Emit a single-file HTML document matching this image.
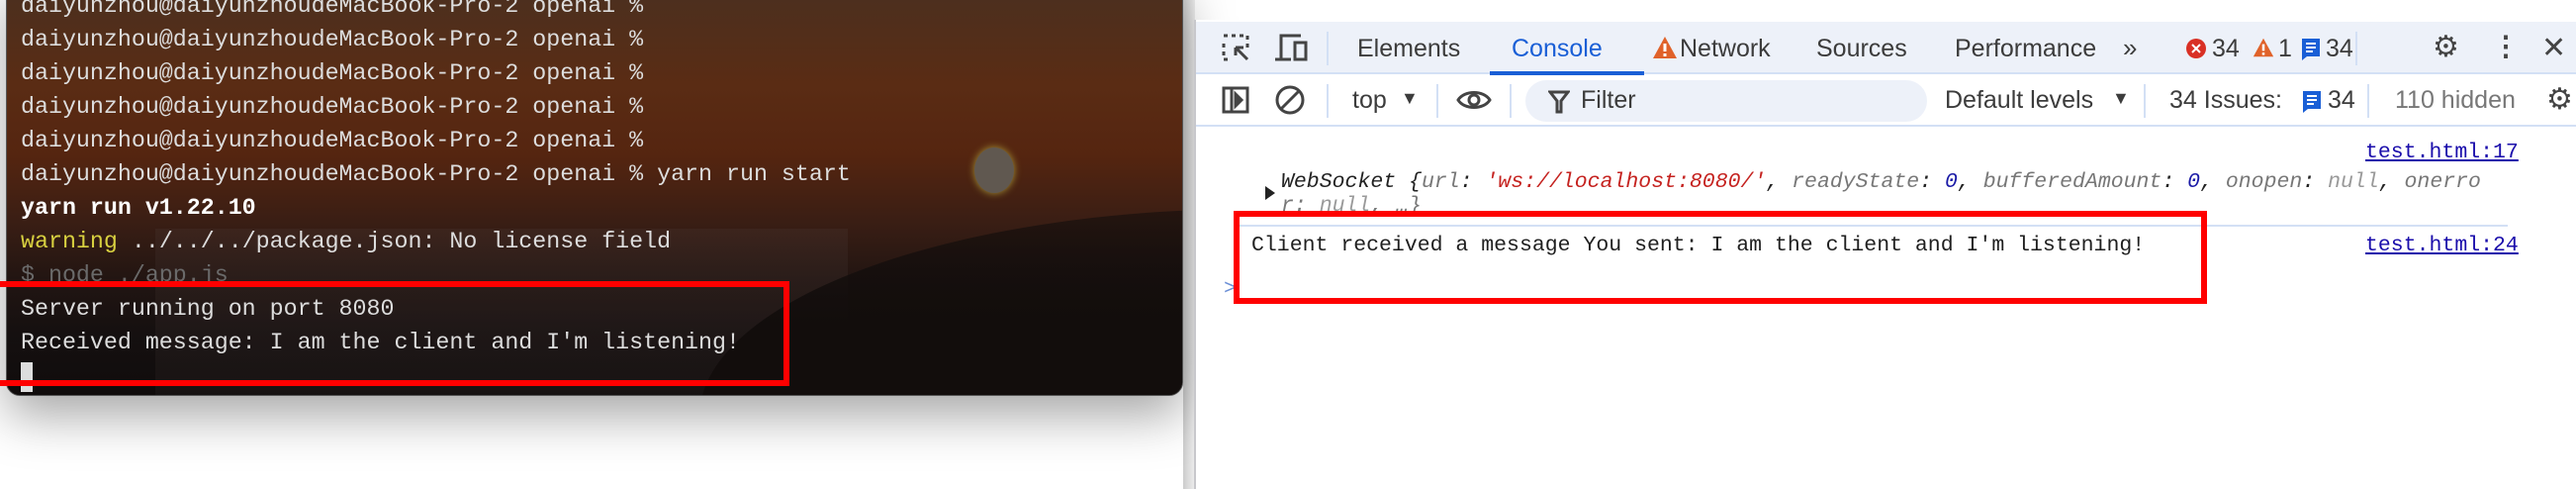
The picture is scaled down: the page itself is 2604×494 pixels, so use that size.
<!DOCTYPE html>
<html><head><meta charset="utf-8"><style>
*{margin:0;padding:0;box-sizing:border-box}
body{width:2604px;height:494px;overflow:hidden;background:#fff;position:relative;font-family:"Liberation Sans",sans-serif}
.term{position:absolute;left:6px;top:-20px;width:1190px;height:420px;border-radius:0 0 14px 14px;
background:linear-gradient(180deg,#4a3020 0%,#5a2c14 25%,#552510 42%,#3a1e14 58%,#221512 72%,#151010 85%,#100c0c 100%);
box-shadow:0 20px 50px rgba(0,0,0,.35);border:1px solid #555;overflow:hidden}
.sun{position:absolute;left:978px;top:168px;width:40px;height:46px;border-radius:50%;background:#605850;box-shadow:0 0 8px #a89838}
.city{position:absolute;left:150px;top:250px;width:700px;height:170px;background:linear-gradient(180deg,rgba(70,50,45,.35),rgba(30,25,25,.5))}
.hill{position:absolute;left:700px;top:230px;width:800px;height:300px;background:linear-gradient(180deg,rgba(20,14,12,.6),#120d0c 40%);border-radius:70% 0 0 0}
.tl{position:absolute;left:14px;font-family:"Liberation Mono",monospace;font-size:23.3px;color:#ddd;white-space:pre;line-height:34px}
.dt{position:absolute;left:1207px;top:20px;width:1397px;height:474px;background:#fff;border-left:2px solid #c8c8cc}
.tabbar{position:absolute;left:0;top:2px;width:100%;height:53px;background:#edf1f9;border-bottom:2px solid #d3e0f5}
.tool{position:absolute;left:0;top:55px;width:100%;height:53px;border-bottom:2px solid #d3e0f5}
.t{position:absolute;font-size:25px;color:#3c3c3c;white-space:nowrap}
.m{position:absolute;font-family:"Liberation Mono",monospace;font-size:21.5px;white-space:pre;color:#1f1f1f}
.red{position:absolute;border:6px solid #f00}
.sep{position:absolute;width:2px;background:#d3e0f5}
</style></head><body>
<div style="position:absolute;left:1196px;top:0;width:12px;height:494px;background:linear-gradient(90deg,#ccc,#eee)"></div>
<div class="term">
<div class="sun"></div><div class="city"></div><div class="hill"></div>
<div class="tl" style="top:8px">daiyunzhou@daiyunzhoudeMacBook-Pro-2 openai %</div>
<div class="tl" style="top:42px">daiyunzhou@daiyunzhoudeMacBook-Pro-2 openai %</div>
<div class="tl" style="top:76px">daiyunzhou@daiyunzhoudeMacBook-Pro-2 openai %</div>
<div class="tl" style="top:110px">daiyunzhou@daiyunzhoudeMacBook-Pro-2 openai %</div>
<div class="tl" style="top:144px">daiyunzhou@daiyunzhoudeMacBook-Pro-2 openai %</div>
<div class="tl" style="top:178px">daiyunzhou@daiyunzhoudeMacBook-Pro-2 openai % yarn run start</div>
<div class="tl" style="top:212px;color:#fff;font-weight:bold">yarn run v1.22.10</div>
<div class="tl" style="top:246px"><span style="color:#d8d040">warning</span> ../../../package.json: No license field</div>
<div class="tl" style="top:280px;color:#6a6a6a">$ node ./app.js</div>
<div class="tl" style="top:314px">Server running on port 8080</div>
<div class="tl" style="top:348px">Received message: I am the client and I'm listening!</div>
<div style="position:absolute;left:14px;top:385px;width:12px;height:30px;background:#ddd"></div>
</div>
<div class="red" style="left:-6px;top:284px;width:804px;height:106px"></div>

<div class="dt">
<div class="tabbar">
<svg style="position:absolute;left:26px;top:12px" width="30" height="30" viewBox="0 0 30 30" fill="none" stroke="#444" stroke-width="3"><path d="M2 2h4M10 2h4M18 2h4M26 2v4M2 10v4M2 18v4M2 26h4M26 10v4" /><path d="M14 14l12 12M14 14h8M14 14v8"/></svg>
<svg style="position:absolute;left:80px;top:12px" width="34" height="28" viewBox="0 0 34 28" fill="none" stroke="#444" stroke-width="3"><path d="M6 26V2h20M0 26h16"/><rect x="20" y="9" width="11" height="17"/></svg>
<div class="sep" style="left:132px;top:10px;height:34px"></div>
<div class="t" style="left:163px;top:13px">Elements</div>
<div class="t" style="left:319px;top:13px;color:#1a5fd6">Console</div>
<div style="position:absolute;left:297px;top:50px;width:156px;height:4px;background:#1a5fd6"></div>
<svg style="position:absolute;left:461px;top:14px" width="26" height="24" viewBox="0 0 26 24"><path d="M13 1L25 23H1z" fill="#e0622a"/><rect x="11.5" y="8" width="3" height="8" fill="#fff"/><rect x="11.5" y="18" width="3" height="3" fill="#fff"/></svg>
<div class="t" style="left:489px;top:13px">Network</div>
<div class="t" style="left:627px;top:13px">Sources</div>
<div class="t" style="left:767px;top:13px">Performance</div>
<div class="t" style="left:937px;top:11px;font-size:26px">&#187;</div>
<svg style="position:absolute;left:1000px;top:16px" width="22" height="22"><circle cx="11" cy="11" r="10" fill="#d93025"/><path d="M7 7l8 8M15 7l-8 8" stroke="#fff" stroke-width="2"/></svg>
<div class="t" style="left:1027px;top:13px">34</div>
<svg style="position:absolute;left:1068px;top:14px" width="22" height="24" viewBox="0 0 26 24"><path d="M13 1L25 23H1z" fill="#e0622a"/><rect x="11.5" y="8" width="3" height="8" fill="#fff"/><rect x="11.5" y="18" width="3" height="3" fill="#fff"/></svg>
<div class="t" style="left:1094px;top:13px">1</div>
<svg style="position:absolute;left:1117px;top:16px" width="20" height="24"><path d="M1 1h18v18H6l-5 4z" fill="#1a5fd6"/><path d="M5 6h10M5 10h10M5 14h7" stroke="#fff" stroke-width="2"/></svg>
<div class="t" style="left:1142px;top:13px">34</div>
<div class="sep" style="left:1172px;top:10px;height:34px"></div>
<div class="t" style="left:1250px;top:8px;font-size:30px;color:#444">&#9881;</div>
<div class="t" style="left:1310px;top:8px;font-size:28px;font-weight:bold;color:#444">&#8942;</div>
<div class="t" style="left:1360px;top:9px;font-size:30px;color:#444">&#10005;</div>
</div>
<div class="tool">
<svg style="position:absolute;left:26px;top:12px" width="28" height="28" fill="none" stroke="#444" stroke-width="3"><rect x="2" y="2" width="24" height="24"/><path d="M10 2v24"/><path d="M14 8l6 6-6 6z" fill="#444"/></svg>
<svg style="position:absolute;left:80px;top:11px" width="30" height="30" fill="none" stroke="#444" stroke-width="3"><circle cx="15" cy="15" r="13"/><path d="M6 24L24 6"/></svg>
<div class="sep" style="left:132px;top:10px;height:34px"></div>
<div class="t" style="left:158px;top:12px">top</div>
<div class="t" style="left:207px;top:14px;font-size:18px">&#9660;</div>
<div class="sep" style="left:243px;top:10px;height:34px"></div>
<svg style="position:absolute;left:263px;top:14px" width="36" height="24" fill="none" stroke="#444" stroke-width="3"><path d="M2 12C8 2 28 2 34 12C28 22 8 22 2 12z"/><circle cx="18" cy="12" r="5"/></svg>
<div class="sep" style="left:317px;top:10px;height:34px"></div>
<div style="position:absolute;left:333px;top:6px;width:406px;height:42px;border-radius:21px;background:#edf1f9"></div>
<svg style="position:absolute;left:356px;top:16px" width="22" height="24" fill="none" stroke="#444" stroke-width="3"><path d="M2 2h18l-7 9v11h-4V11z"/></svg>
<div class="t" style="left:389px;top:12px">Filter</div>
<div class="t" style="left:757px;top:12px">Default levels</div>
<div class="t" style="left:926px;top:14px;font-size:18px">&#9660;</div>
<div class="sep" style="left:958px;top:10px;height:34px"></div>
<div class="t" style="left:984px;top:12px">34 Issues:</div>
<svg style="position:absolute;left:1118px;top:16px" width="20" height="24"><path d="M1 1h18v18H6l-5 4z" fill="#1a5fd6"/><path d="M5 6h10M5 10h10M5 14h7" stroke="#fff" stroke-width="2"/></svg>
<div class="t" style="left:1144px;top:12px">34</div>
<div class="sep" style="left:1184px;top:10px;height:34px"></div>
<div class="t" style="left:1212px;top:12px;color:#777">110 hidden</div>
<div class="t" style="left:1365px;top:8px;font-size:30px;color:#444">&#9881;</div>
</div>
<div class="m" style="left:1182px;top:122px;color:#1a0dab;text-decoration:underline">test.html:17</div>
<div style="position:absolute;left:70px;top:168px;width:0;height:0;border-top:7px solid transparent;border-bottom:7px solid transparent;border-left:10px solid #222"></div>
<div class="m" style="left:86px;top:152px;font-style:italic;color:#222">WebSocket {<span style="color:#777">url</span>: <span style="color:#c5221f">'ws://localhost:8080/'</span>, <span style="color:#777">readyState</span>: <span style="color:#1a1aa6">0</span>, <span style="color:#777">bufferedAmount</span>: <span style="color:#1a1aa6">0</span>, <span style="color:#777">onopen</span>: <span style="color:#999">null</span>, <span style="color:#777">onerro</span></div>
<div class="m" style="left:86px;top:176px;font-style:italic;color:#777">r: <span style="color:#999">null</span>, …}</div>
<div style="position:absolute;left:40px;top:207px;width:1286px;height:2px;background:#d3e0f5"></div>
<div class="m" style="left:56px;top:216px">Client received a message You sent: I am the client and I'm listening!</div>
<div class="m" style="left:1182px;top:216px;color:#1a0dab;text-decoration:underline">test.html:24</div>
<div class="m" style="left:28px;top:260px;color:#6b8fd6">&gt;</div>
</div>
<div class="red" style="left:1247px;top:213px;width:984px;height:94px"></div>
</body></html>
